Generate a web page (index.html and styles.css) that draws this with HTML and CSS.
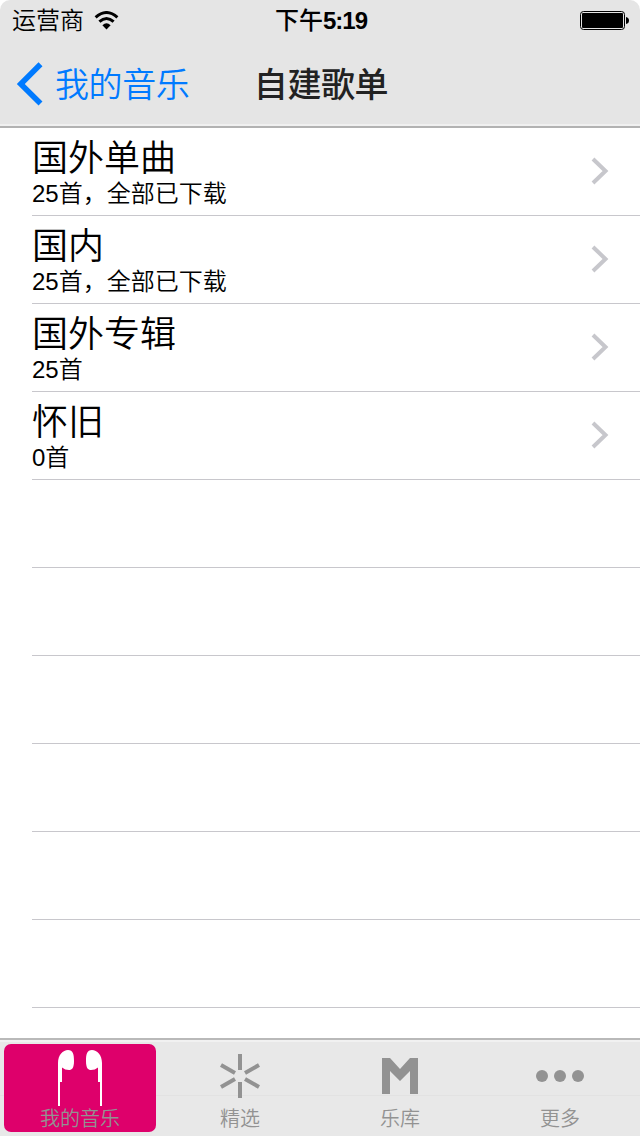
FILE: index.html
```html
<!DOCTYPE html>
<html lang="zh-CN">
<head>
<meta charset="utf-8">
<title>自建歌单</title>
<link rel="stylesheet" href="styles.css">
</head>
<body>
<div class="app">
  <header class="header">
    <div class="status">
      <div class="carrier"><span>运营商</span>
        <svg class="wifi" width="26" height="20" viewBox="0 0 26 20">
          <path d="M1.6 6.400Q12.500-3.300 23.400 6.400M5.400 10.700Q12.500 4.200 19.600 10.700" fill="none" stroke="#000" stroke-width="3"/>
          <path d="M8.400 14.200Q12.500 10.400 16.600 14.200L12.500 18.600Z"/>
        </svg>
      </div>
      <div class="time">下午<span class="digits">5:19</span></div>
      <svg class="battery" width="50" height="20" viewBox="0 0 50 20">
        <rect x=".5" y=".5" width="44" height="18" rx="3" fill="none" stroke="#000"/>
        <rect x="2" y="2" width="41" height="15" rx="1"/>
        <path d="M46 6Q49 6.500 49 9.500Q49 12.500 46 13Z"/>
      </svg>
    </div>
    <nav class="navbar">
      <a class="back">
        <svg width="28" height="44" viewBox="0 0 28 44"><path d="M24.500 2.300L4.800 22L24.500 41.500" fill="none" stroke="#007aff" stroke-width="5.600"/></svg>
        <span class="back-label">我的音乐</span>
      </a>
      <h1 class="heading">自建歌单</h1>
    </nav>
  </header>

  <main class="list">
    <div class="row"><div class="info"><div class="name">国外单曲</div><div class="count">25首，全部已下载</div></div><svg class="chevron" width="18" height="28" viewBox="0 0 18 28"><path d="M2 2L14.500 14L2 26" fill="none" stroke="#c7c7cc" stroke-width="4"/></svg></div>
    <div class="row"><div class="info"><div class="name">国内</div><div class="count">25首，全部已下载</div></div><svg class="chevron" width="18" height="28" viewBox="0 0 18 28"><path d="M2 2L14.500 14L2 26" fill="none" stroke="#c7c7cc" stroke-width="4"/></svg></div>
    <div class="row"><div class="info"><div class="name">国外专辑</div><div class="count">25首</div></div><svg class="chevron" width="18" height="28" viewBox="0 0 18 28"><path d="M2 2L14.500 14L2 26" fill="none" stroke="#c7c7cc" stroke-width="4"/></svg></div>
    <div class="row"><div class="info"><div class="name">怀旧</div><div class="count">0首</div></div><svg class="chevron" width="18" height="28" viewBox="0 0 18 28"><path d="M2 2L14.500 14L2 26" fill="none" stroke="#c7c7cc" stroke-width="4"/></svg></div>
    <div class="row"></div>
    <div class="row"></div>
    <div class="row"></div>
    <div class="row"></div>
    <div class="row"></div>
    <div class="row"></div>
  </main>

  <footer class="tabs">
    <a class="tab active">
      <svg class="icon" width="48" height="60" viewBox="0 0 48 60" fill="#fff">
        <path d="M2 60V17C2 9 7 4 12 4C17 4 18 8 18 15C18 22 16 24 13 24Q9 24 6 21.500V36H4V60Z"/>
        <path d="M46 60V17C46 9 41 4 36 4C31 4 30 8 30 15C30 22 32 24 35 24Q39 24 42 21.500V36H44V60Z"/>
      </svg>
      <span class="label">我的音乐</span>
    </a>
    <a class="tab">
      <svg class="icon" width="48" height="60" viewBox="0 0 48 60" fill="none" stroke="#929292" stroke-width="4">
        <path d="M24 8V24M24 36V52M5 19L19 27M43 19L29 27M5 41L19 33M43 41L29 33"/>
      </svg>
      <span class="label">精选</span>
    </a>
    <a class="tab">
      <svg class="icon" width="48" height="60" viewBox="0 0 48 60" fill="#929292"><path d="M6 48V12H14L24 23L34 12H42V48H34V25L24 35L14 25V48Z"/></svg>
      <span class="label">乐库</span>
    </a>
    <a class="tab">
      <svg class="icon" width="48" height="60" viewBox="0 0 48 60" fill="#929292"><circle cx="6" cy="30" r="6"/><circle cx="24" cy="30" r="6"/><circle cx="42" cy="30" r="6"/></svg>
      <span class="label">更多</span>
    </a>
  </footer>
</div>
</body>
</html>
```
FILE: styles.css
```css
* { box-sizing: border-box; }
body { margin: 0; background: #fff; }
svg { display: block; flex: none; }
.app {
  width: 640px;
  height: 1136px;
  display: flex;
  flex-direction: column;
  overflow: hidden;
  font-family: "Liberation Sans", "Noto Sans CJK SC", sans-serif;
  font-weight: 350;
  color: #000;
}
.header {
  height: 128px;
  flex: none;
  background: #e5e5e5;
  border-bottom: 2px solid #b2b2b2;
  box-shadow: inset 0 -2px #f0f0f0;
  border-radius: 10px 10px 0 0;
}
.status {
  height: 42px;
  display: grid;
  grid-template-columns: 1fr auto 1fr;
  align-items: center;
  padding: 0 10px 0 12px;
  font-size: 24px;
  line-height: 42px;
}
.carrier { display: flex; align-items: center; gap: 10px; }
.time { font-weight: 500; }
.digits { font-weight: 700; letter-spacing: -1px; }
.battery { justify-self: end; }
.navbar {
  height: 84px;
  display: grid;
  grid-template-columns: 1fr auto 1fr;
  align-items: center;
}
.back {
  display: flex;
  align-items: center;
  gap: 11px;
  padding-left: 16px;
  color: #007aff;
  font-size: 34px;
  line-height: 44px;
  white-space: nowrap;
}
.back-label { padding-top: 2px; letter-spacing: -.4px; }
.heading { margin: 0; padding: 2px 0 0 2px; font-size: 34px; font-weight: 500; letter-spacing: -.4px; line-height: 44px; color: #222; }
.list { flex: 1; min-height: 0; overflow: hidden; padding-left: 32px; }
.row {
  height: 88px;
  display: flex;
  justify-content: space-between;
  border-bottom: 1px solid #c8c7cc;
}
.info { padding-top: 9px; }
.name { font-size: 36px; line-height: 44px; }
.count { font-size: 24px; line-height: 26px; }
.chevron { margin: 29px 31px 0 0; }
.tabs {
  height: 98px;
  flex: none;
  display: grid;
  grid-template-columns: repeat(4, 160px);
  background: linear-gradient(#f1f1f1 2px, #e8e8e8 2px 55px, #e2e2e2 55px 56px, #e8e8e8 56px);
  border-top: 2px solid #b9b9b9;
}
.tab {
  display: flex;
  flex-direction: column;
  align-items: center;
  margin: 4px;
  padding-top: 2px;
  border-radius: 7px;
  color: #929292;
}
.active { background: #de006b; }
.label { font-size: 20px; line-height: 26px; }
```
